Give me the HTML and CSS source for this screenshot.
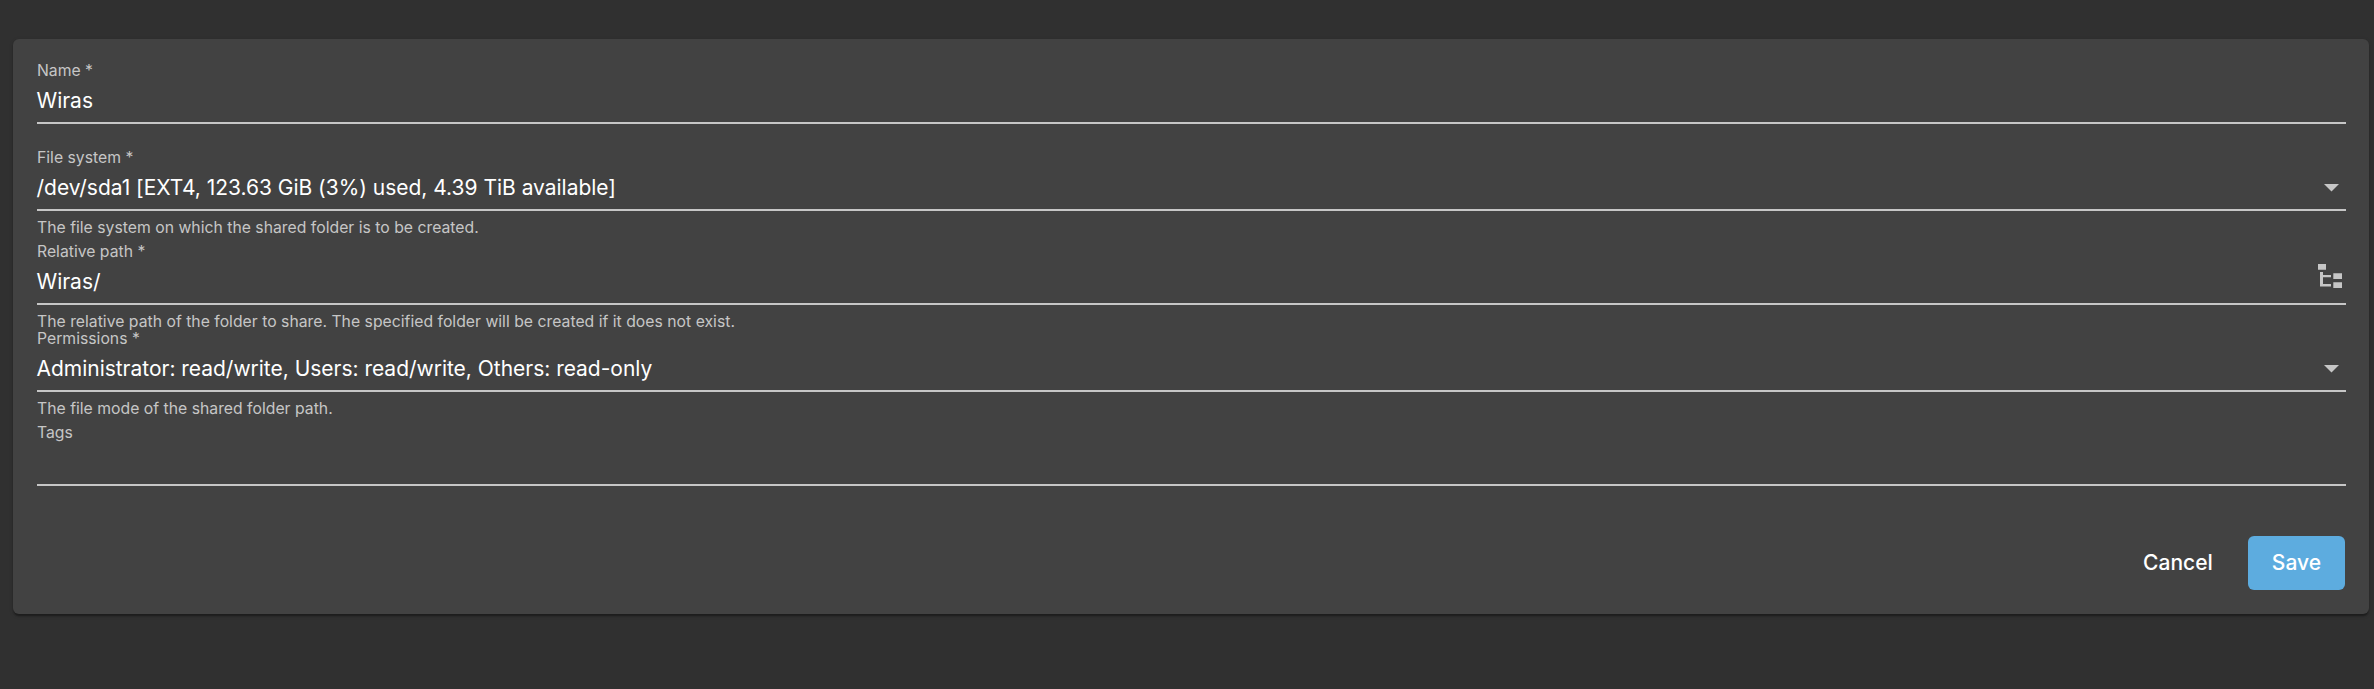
FILE: index.html
```html
<!DOCTYPE html>
<html lang="en">
<head>
<meta charset="utf-8">
<title>Shared folder</title>
<link rel="stylesheet" href="styles.css">
</head>
<body>
<form class="card">
  <div class="field field-plain">
    <div class="label">Name *</div>
    <div class="control"><span class="value">Wiras</span></div>
  </div>
  <div class="field">
    <div class="label">File system *</div>
    <div class="control"><span class="value">/dev/sda1 [EXT4, 123.63 GiB (3%) used, 4.39 TiB available]</span><svg class="arrow" viewBox="0 0 15 8"><path d="M0 0h15L7.5 7.5z"/></svg></div>
    <div class="hint">The file system on which the shared folder is to be created.</div>
  </div>
  <div class="field field-tight">
    <div class="label">Relative path *</div>
    <div class="control"><span class="value">Wiras/</span><svg class="tree" viewBox="0 0 24 24"><path d="M0 0h8v5.700H0zM2 8h3v3h8v2.300H5v6.700h8v2.500H2zM15.300 9.200h8.700v5.800h-8.700zM15.300 18.200h8.700V24h-8.700z"/></svg></div>
    <div class="hint">The relative path of the folder to share. The specified folder will be created if it does not exist.</div>
  </div>
  <div class="field">
    <div class="label">Permissions *</div>
    <div class="control"><span class="value">Administrator: read/write, Users: read/write, Others: read-only</span><svg class="arrow" viewBox="0 0 15 8"><path d="M0 0h15L7.5 7.5z"/></svg></div>
    <div class="hint">The file mode of the shared folder path.</div>
  </div>
  <div class="field">
    <div class="label">Tags</div>
    <div class="control"></div>
  </div>
  <div class="actions">
    <button type="button" class="btn">Cancel</button>
    <button type="button" class="btn btn-primary">Save</button>
  </div>
</form>
</body>
</html>
```
FILE: styles.css
```css
* { box-sizing: border-box; }
body {
  margin: 0;
  padding: 39px 5px 0 13px;
  min-height: 689px;
  background: #303030;
  color: #fff;
  font-family: Inter, sans-serif;
}
.card {
  height: 575px;
  padding: 22px 24px 24px;
  border-radius: 6px;
  background: #424242;
  box-shadow: 0 3px 1.5px -1.5px rgba(0,0,0,.2), 0 1.5px 1.5px rgba(0,0,0,.14), 0 1.5px 4.5px rgba(0,0,0,.12);
  display: flex;
  flex-direction: column;
}
.field { margin-bottom: 4px; }
.field-plain { margin-bottom: 24px; }
.field-tight { margin-bottom: -3px; }
.label, .hint {
  font-size: 15.75px;
  line-height: 20px;
  color: #c6c6c6;
  white-space: nowrap;
}
.label { margin-bottom: 8px; }
.hint {
  margin-top: 7px;
  letter-spacing: 0.01px;
}
.control {
  display: flex;
  justify-content: space-between;
  height: 35px;
  margin-right: -1px;
  padding-bottom: 9px;
  border-bottom: 2px solid #c6c6c6;
}
.value {
  font-size: 21px;
  line-height: 24px;
  letter-spacing: -0.02px;
  margin-left: -0.5px;
  white-space: nowrap;
}
.arrow, .tree { fill: #c6c6c6; }
.arrow {
  width: 15px;
  height: 8px;
  margin: 8px 7px 0 0;
}
.tree {
  width: 24px;
  height: 24px;
  margin: -6px 4px 0 0;
}
.actions {
  display: flex;
  justify-content: flex-end;
  gap: 11px;
  margin-top: auto;
}
.btn {
  height: 54px;
  padding: 0 24px 1px;
  border: 0;
  border-radius: 6px;
  background: transparent;
  color: #fff;
  font: 500 21px Inter, sans-serif;
}
.btn-primary { background: #5dacdf; }
```
